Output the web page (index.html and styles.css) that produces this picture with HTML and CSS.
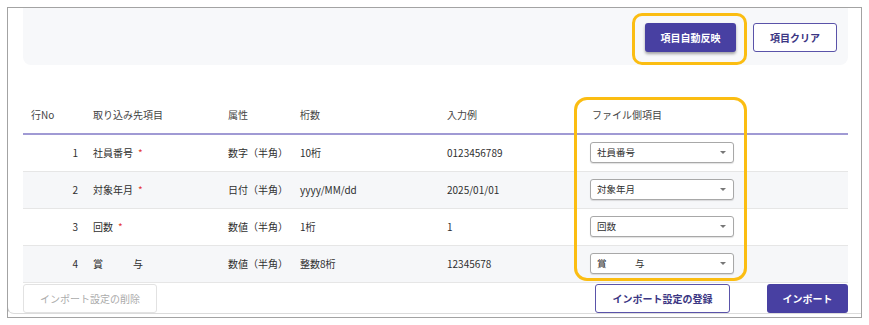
FILE: index.html
```html
<!DOCTYPE html>
<html lang="ja">
<head>
    <meta charset="UTF-8">
    <title>インポート設定</title>
    <link rel="stylesheet" href="styles.css">
</head>
<body>
    <div class="frame">
        <div class="card">
            <div class="toolbar">
                <button class="btn btn-primary btn-raised">項目自動反映</button>
                <button class="btn btn-outline">項目クリア</button>
            </div>

            <table class="mapping">
                <colgroup>
                    <col class="c-no">
                    <col class="c-name">
                    <col class="c-attr">
                    <col class="c-digits">
                    <col class="c-sample">
                    <col class="c-file">
                </colgroup>
                <thead>
                    <tr>
                        <th>行No</th>
                        <th>取り込み先項目</th>
                        <th>属性</th>
                        <th>桁数</th>
                        <th>入力例</th>
                        <th class="th-file">ファイル側項目</th>
                    </tr>
                </thead>
                <tbody>
                    <tr>
                        <td class="num">1</td>
                        <td>社員番号<span class="req">*</span></td>
                        <td>数字（半角）</td>
                        <td>10桁</td>
                        <td>0123456789</td>
                        <td><div class="select">社員番号<span class="caret"></span></div></td>
                    </tr>
                    <tr class="alt">
                        <td class="num">2</td>
                        <td>対象年月<span class="req">*</span></td>
                        <td>日付（半角）</td>
                        <td>yyyy/MM/dd</td>
                        <td>2025/01/01</td>
                        <td><div class="select">対象年月<span class="caret"></span></div></td>
                    </tr>
                    <tr>
                        <td class="num">3</td>
                        <td>回数<span class="req">*</span></td>
                        <td>数値（半角）</td>
                        <td>1桁</td>
                        <td>1</td>
                        <td><div class="select">回数<span class="caret"></span></div></td>
                    </tr>
                    <tr class="alt">
                        <td class="num">4</td>
                        <td>賞　　　与</td>
                        <td>数値（半角）</td>
                        <td>整数8桁</td>
                        <td>12345678</td>
                        <td><div class="select">賞　　　与<span class="caret"></span></div></td>
                    </tr>
                </tbody>
            </table>

            <div class="footer">
                <button class="btn btn-disabled" disabled>インポート設定の削除</button>
                <div class="footer-right">
                    <button class="btn btn-outline btn-wide">インポート設定の登録</button>
                    <button class="btn btn-primary btn-import">インポート</button>
                </div>
            </div>
        </div>

        <div class="highlight hl-auto"></div>
        <div class="highlight hl-column"></div>
    </div>
</body>
</html>
```

FILE: styles.css
```css
* {
    margin: 0;
    padding: 0;
    box-sizing: border-box;
}

body {
    font-family: "Noto Sans CJK JP", "Noto Sans", sans-serif;
    font-size: 10px;
    color: #2f2f2f;
    background: #fff;
}

.frame {
    position: relative;
    margin: 7px 0 0 7px;
    width: 855px;
    height: 311px;
    border: 1px solid #a3a3a3;
    overflow: hidden;
}

.card {
    height: 306px;
    margin-left: -1px;
    padding: 0 13px 0 16px;
    border-left: 1px solid #c8c8c8;
    border-bottom: 1px solid #dcdcdc;
    border-bottom-left-radius: 7px;
}

.toolbar {
    height: 57px;
    margin-left: -1px;
    background: #f7f8fa;
    border-radius: 0 0 8px 8px;
    display: flex;
    align-items: center;
    justify-content: flex-end;
    gap: 17px;
    padding: 2px 11px 0 0;
}

.btn {
    height: 29px;
    border-radius: 3px;
    font-family: inherit;
    font-size: 10px;
    font-weight: bold;
    cursor: pointer;
}

.btn-primary {
    background: #4840a2;
    border: none;
    color: #fff;
    width: 91px;
}

.btn-raised {
    box-shadow: 0 2px 3px rgba(0, 0, 0, 0.35);
}

.btn-outline {
    background: #fff;
    border: 1px solid #5a53a9;
    color: #3b3683;
    width: 84px;
}

.btn-wide {
    width: 135px;
}

.btn-import {
    width: 81px;
}

.btn-disabled {
    background: #fff;
    border: 1px solid #e2e2e2;
    color: #ababab;
    font-weight: normal;
    width: 134px;
}

.mapping {
    width: 825px;
    margin: 32px 0 0 -1px;
    border-collapse: collapse;
    table-layout: fixed;
}

.c-no { width: 62px; }
.c-name { width: 135px; }
.c-attr { width: 72px; }
.c-digits { width: 147px; }
.c-sample { width: 143px; }
.c-file { width: 266px; }

.mapping th {
    height: 37px;
    padding: 0 8px 2px;
    text-align: left;
    font-weight: normal;
    color: #444;
    border-bottom: 2px solid #a09ad4;
}

.mapping th.th-file {
    padding-left: 10px;
}

.mapping td {
    height: 37px;
    padding: 0 8px;
    border-bottom: 1px solid #e6e6e6;
    white-space: nowrap;
}

.mapping tr.alt td {
    background: #f6f7f9;
}

.mapping td.num {
    text-align: right;
    padding-right: 7px;
}

.req {
    color: #e53935;
    margin-left: 5px;
}

.select {
    position: relative;
    width: 144px;
    height: 21px;
    line-height: 19px;
    padding-left: 6px;
    font-size: 9.5px;
    border: 1px solid #a8a8a8;
    border-radius: 3px;
    background: #fff;
    box-shadow: 0 1px 1px rgba(0, 0, 0, 0.12);
}

.caret {
    position: absolute;
    right: 7px;
    top: 8px;
    border-left: 3px solid transparent;
    border-right: 3px solid transparent;
    border-top: 3px solid #777;
}

.footer {
    display: flex;
    justify-content: space-between;
    align-items: flex-start;
    margin-left: -1px;
    padding-top: 1px;
}

.footer-right {
    display: flex;
    gap: 37px;
}

.highlight {
    position: absolute;
    border: 3px solid #fbbd12;
    pointer-events: none;
}

.hl-auto {
    left: 624px;
    top: 5px;
    width: 115px;
    height: 52px;
    border-radius: 10px;
}

.hl-column {
    left: 566px;
    top: 89px;
    width: 173px;
    height: 184px;
    border-radius: 13px;
}
```
